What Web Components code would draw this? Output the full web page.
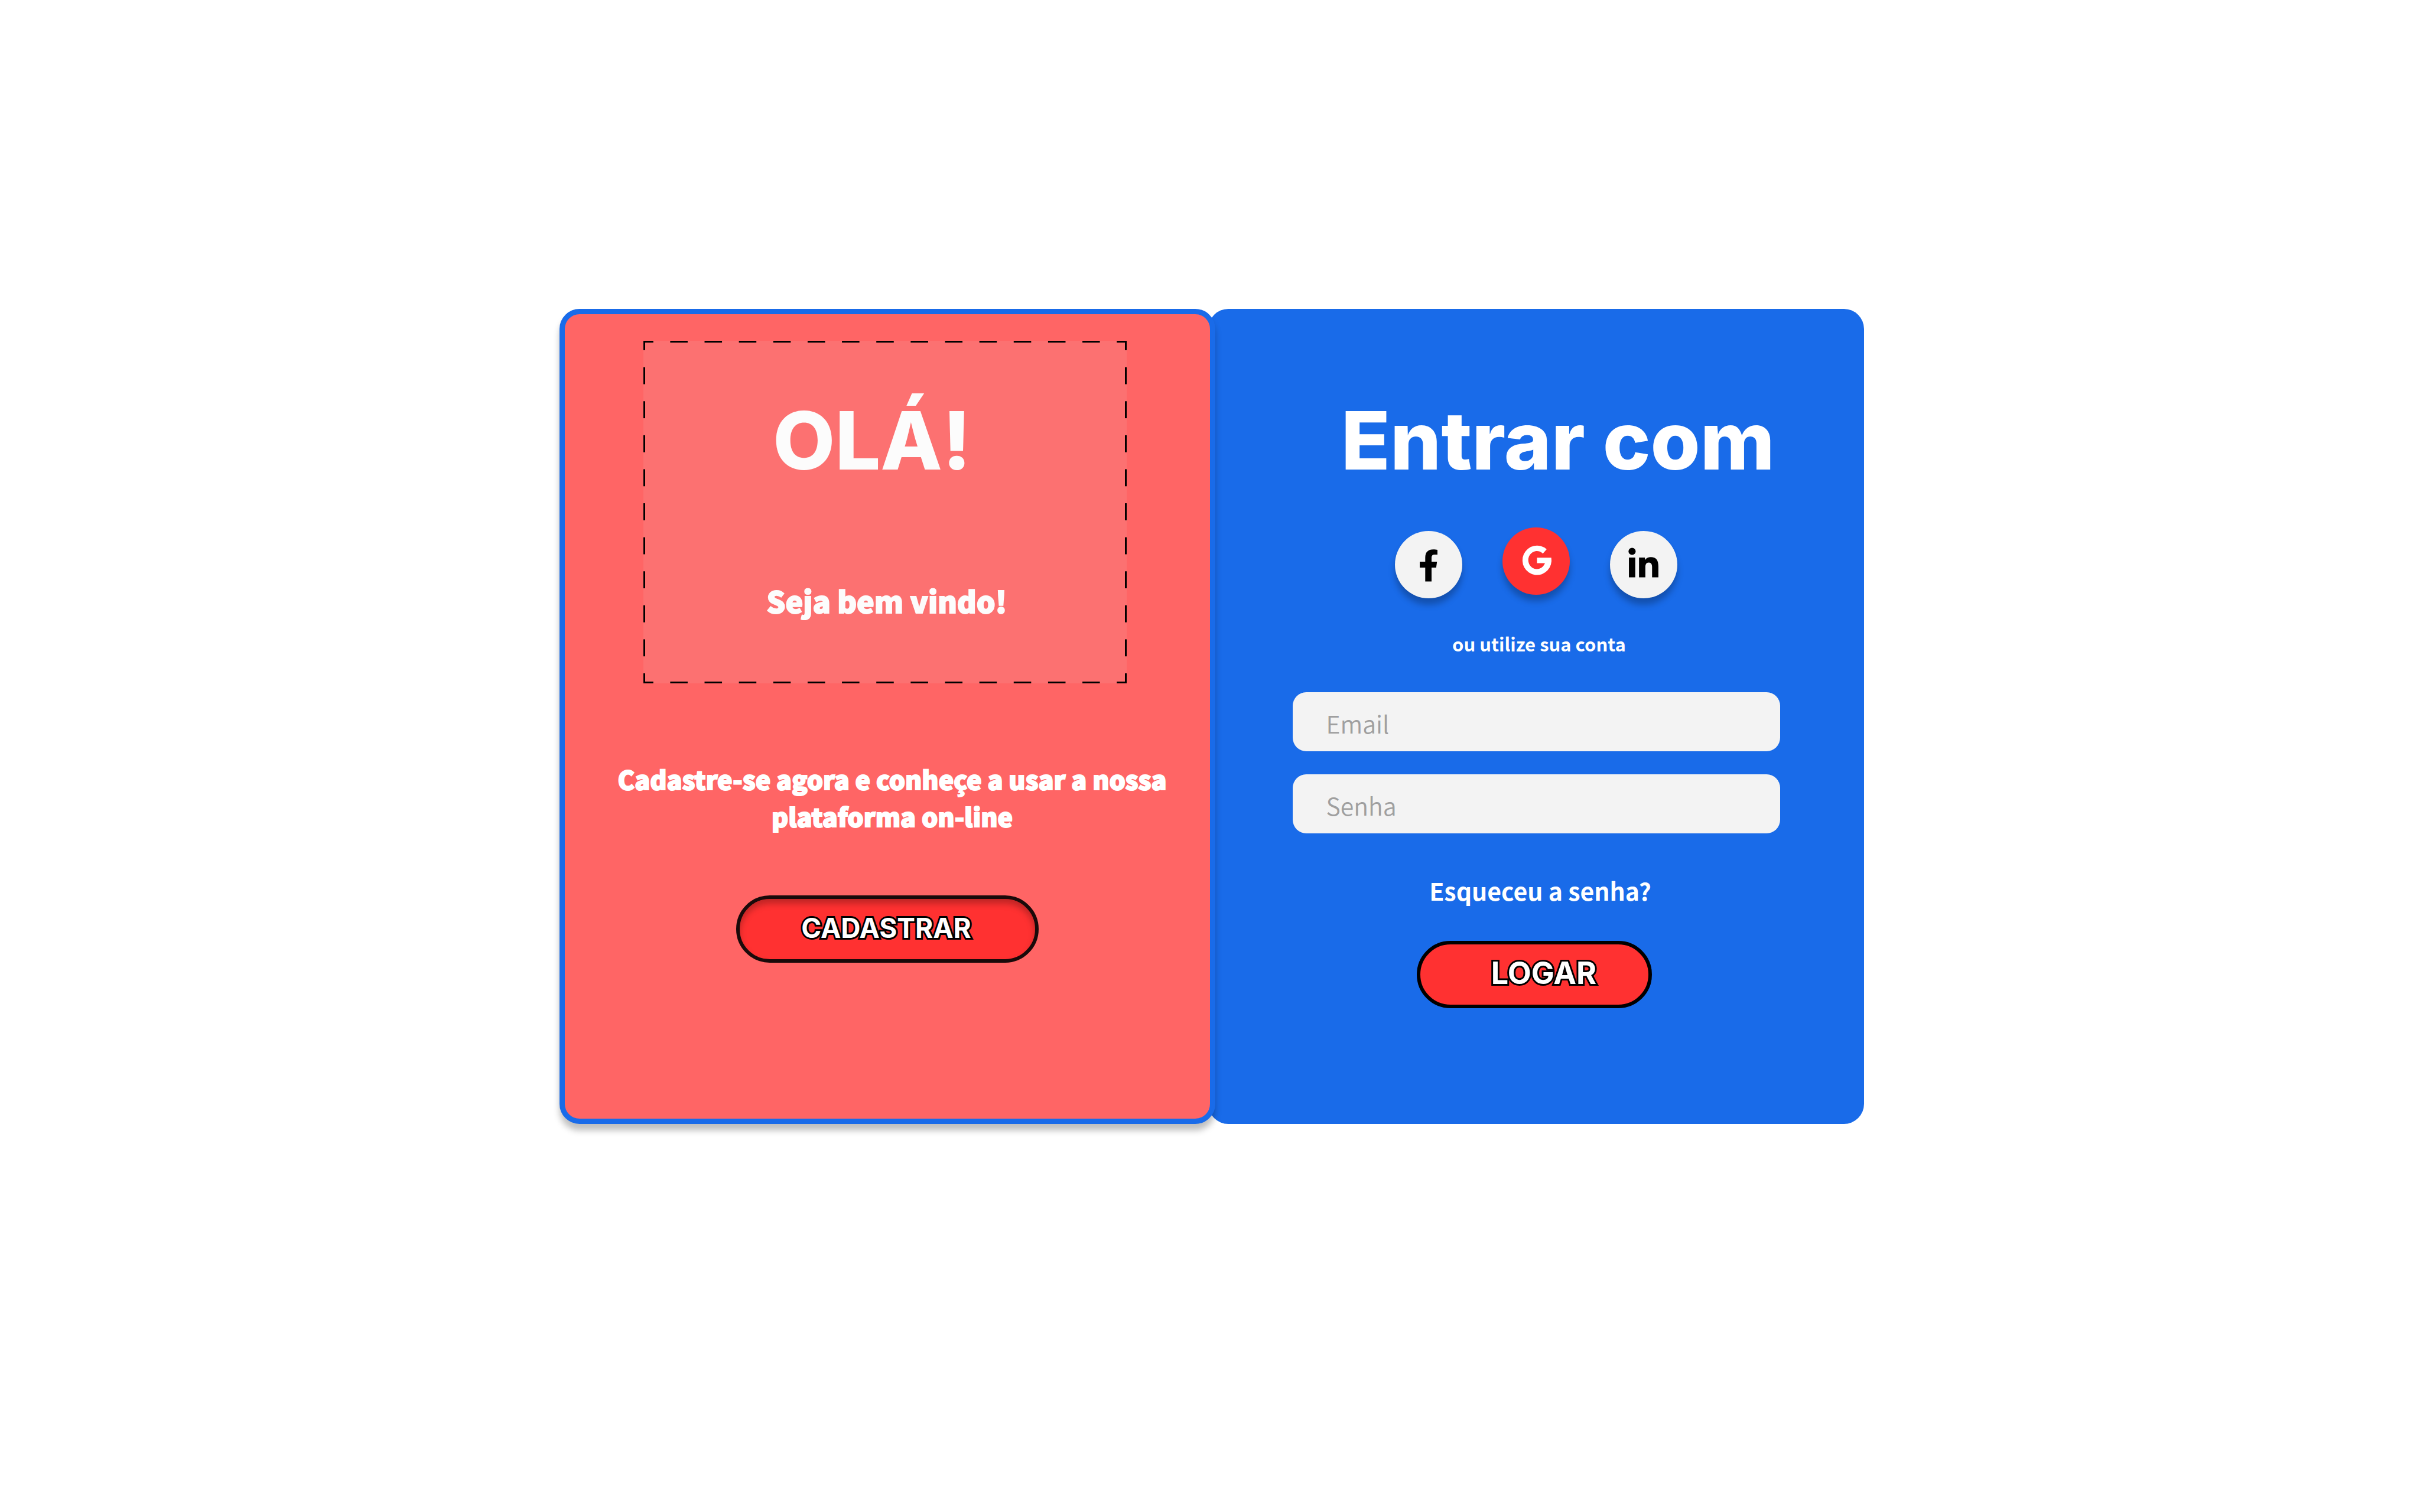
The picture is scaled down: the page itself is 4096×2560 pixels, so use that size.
<!DOCTYPE html>
<html lang="pt-BR">
<head>
<meta charset="utf-8">
<meta name="viewport" content="width=device-width, initial-scale=1">
<title>Entrar</title>
<style>
  html, body { margin: 0; background: #fff; }
  body {
    --blue: #196be9;
    --coral: #ff6565;
    --red: #ff3131;
    --mist: #f3f3f3;
    --display: Inter, "Open Sans", sans-serif;
    --text: "Noto Sans CJK JP", "Noto Sans", sans-serif;
    min-height: 100vh;
    font-family: var(--text);
    color: #fff;
  }
</style>
</head>
<body>
<login-page>
  <welcome-card slot="welcome">
    <welcome-box slot="box">
      <span slot="title">OLÁ!</span>
      <span slot="subtitle">Seja bem vindo!</span>
    </welcome-box>
    <span slot="text">Cadastre-se agora e conheçe a usar a nossa plataforma on-line</span>
    <pill-button slot="action" variant="wide">CADASTRAR</pill-button>
  </welcome-card>
  <login-card slot="login">
    <span slot="title">Entrar com</span>
    <social-button slot="social" network="facebook"></social-button>
    <social-button slot="social" network="google" active></social-button>
    <social-button slot="social" network="linkedin"></social-button>
    <span slot="hint">ou utilize sua conta</span>
    <text-field slot="fields" type="email" label="Email"></text-field>
    <text-field slot="fields" type="password" label="Senha"></text-field>
    <span slot="forgot">Esqueceu a senha?</span>
    <pill-button slot="action">LOGAR</pill-button>
  </login-card>
</login-page>

<script>
  const define = (name, markup, setup) => {
    const template = document.createElement('template');
    template.innerHTML = markup;
    customElements.define(name, class extends HTMLElement {
      constructor() {
        super();
        this.attachShadow({ mode: 'open' }).append(template.content.cloneNode(true));
      }
      connectedCallback() { if (setup) setup(this, this.shadowRoot); }
    });
  };

  define('login-page', `
    <style>
      :host { display: block; padding: 523px 0 0 6px; }
      main { display: flex; max-width: 2208px; margin: 0 auto; }
      ::slotted(*) { flex: 1 1 50%; min-width: 0; }
      ::slotted([slot="welcome"]) { z-index: 1; margin-right: -12px; }
    </style>
    <main><slot name="welcome"></slot><slot name="login"></slot></main>
  `);

  define('welcome-card', `
    <style>
      :host {
        display: block; box-sizing: border-box; position: relative;
        border: 9px solid var(--blue); border-radius: 34px;
        background: var(--coral); box-shadow: 0 11px 11px rgba(0, 0, 0, .25);
      }
      section {
        display: flex; flex-direction: column; align-items: center;
        padding: 45px 64px 264px;
      }
      p {
        margin: 130px 0 103px; padding-left: 16px; max-width: 948px;
        font-size: 43px; line-height: 63px; font-weight: 900; text-align: center;
        -webkit-text-stroke: 2px currentColor;
      }
    </style>
    <section>
      <slot name="box"></slot>
      <p><slot name="text"></slot></p>
      <slot name="action"></slot>
    </section>
  `);

  define('welcome-box', `
    <style>
      :host {
        --h: linear-gradient(90deg, #000 25%, transparent 25% 75%, #000 75%);
        --v: linear-gradient(#000 25%, transparent 25% 75%, #000 75%);
        display: flex; flex-direction: column; align-items: center; gap: 166px;
        box-sizing: border-box; width: 818px; max-width: 100%; margin-right: 8px;
        padding: 95px 0 107px; border: 2px solid transparent;
        background:
          var(--h) 0 -2px / 58px 3px round no-repeat,
          var(--h) 0 calc(100% + 2px) / 58px 3px round no-repeat,
          var(--v) -2px 0 / 3px 58px no-repeat round,
          var(--v) calc(100% + 2px) 0 / 3px 58px no-repeat round,
          rgba(229, 229, 229, .1);
        color: #fcfcfc; text-align: center;
      }
      h1 {
        margin: 0; padding-right: 44px;
        font: 800 136px/144px var(--display);
      }
      p {
        margin: 0; padding-left: 6px; font-size: 50px; line-height: 64px; font-weight: 900;
        -webkit-text-stroke: 2px currentColor;
      }
    </style>
    <h1><slot name="title"></slot></h1>
    <p><slot name="subtitle"></slot></p>
  `);

  define('login-card', `
    <style>
      :host {
        display: block; box-sizing: border-box;
        border-radius: 34px; background: var(--blue);
      }
      form {
        display: flex; flex-direction: column; align-items: center;
        padding: 151px 64px;
      }
      h2 { margin: 0 0 81px; padding-left: 74px; font: 800 136px/144px var(--display); }
      .social { display: flex; gap: 68px; }
      p { margin: 57px 0 62px; padding-left: 10px; font-size: 31px; line-height: 40px; font-weight: 700; }
      .fields { display: flex; flex-direction: column; gap: 39px; width: 825px; max-width: 100%; }
      a {
        margin: 68px 0 58px; padding-left: 14px;
        font-size: 41px; line-height: 56px; font-weight: 700;
        color: inherit; text-decoration: none;
      }
      ::slotted(pill-button) { margin-right: 6px; }
    </style>
    <form>
      <h2><slot name="title"></slot></h2>
      <div class="social"><slot name="social"></slot></div>
      <p><slot name="hint"></slot></p>
      <div class="fields"><slot name="fields"></slot></div>
      <a href="#"><slot name="forgot"></slot></a>
      <slot name="action"></slot>
    </form>
  `);

  const marks = {
    facebook: ['Facebook', '<path d="M72 120V87H59V73H72V64C72 50 79 44 91 44C95 44 99 45 101 45V56H94C89 56 87 59 87 64V73H100L98 87H87V120Z"/>'],
    google: ['Google', '<path d="M105 52A34.500 35 0 1 0 116 72H82V85H101A20.500 21.500 0 1 1 96 62Z"/>'],
    linkedin: ['LinkedIn', '<circle cx="52.500" cy="48.500" r="8.500"/><path d="M45 63H60V110H45ZM69 63H83V69C86 64 91 62 97 62C110 62 115 70 115 84V110H100V86C100 79 98 75 92 75C86 75 84 80 84 86V110H69Z"/>']
  };

  define('social-button', `
    <style>
      :host { display: block; }
      button {
        display: block; width: 114px; height: 114px; padding: 0; border: 0; border-radius: 50%;
        background: var(--mist); color: #000; box-shadow: 0 11px 11px rgba(0, 0, 0, .25);
      }
      svg { display: block; width: 114px; height: 114px; fill: currentColor; }
      :host([active]) button { background: var(--red); color: #fff; }
      :host([active]) { margin-top: -6px; }
    </style>
    <button type="button"><svg viewBox="0 0 160 160" aria-hidden="true"></svg></button>
  `, (el, root) => {
    const [name, shape] = marks[el.getAttribute('network')];
    root.querySelector('button').setAttribute('aria-label', name);
    root.querySelector('svg').innerHTML = shape;
  });

  define('text-field', `
    <style>
      :host { display: block; }
      input {
        display: block; box-sizing: border-box; width: 100%; height: 100px;
        padding: 4px 57px 0; border: 0; border-radius: 23px; outline: 0;
        background: var(--mist); color: #333;
        font-family: var(--text); font-size: 41px; font-weight: 350;
      }
      input::placeholder { color: #9f9f9f; opacity: 1; }
    </style>
    <input>
  `, (el, root) => {
    const input = root.querySelector('input');
    input.type = el.getAttribute('type');
    input.placeholder = el.getAttribute('label');
    input.setAttribute('aria-label', el.getAttribute('label'));
  });

  define('pill-button', `
    <style>
      :host { display: block; }
      button {
        display: block; box-sizing: border-box; width: 398px; height: 114px;
        padding: 0 0 4px 32px; border: 6px solid #000; border-radius: 57px;
        background: var(--red); color: #fff;
        font: 700 52px/58px var(--display); text-align: center;
        -webkit-text-stroke: 6px #000; paint-order: stroke fill;
      }
      :host([variant="wide"]) button {
        width: 512px; padding: 0 4px 4px 0; border-color: #1a0a0a; font-size: 46px;
        box-shadow: inset 0 8px 11px rgba(0, 0, 0, .25);
      }
    </style>
    <button type="button"><slot></slot></button>
  `);
</script>
</body>
</html>
